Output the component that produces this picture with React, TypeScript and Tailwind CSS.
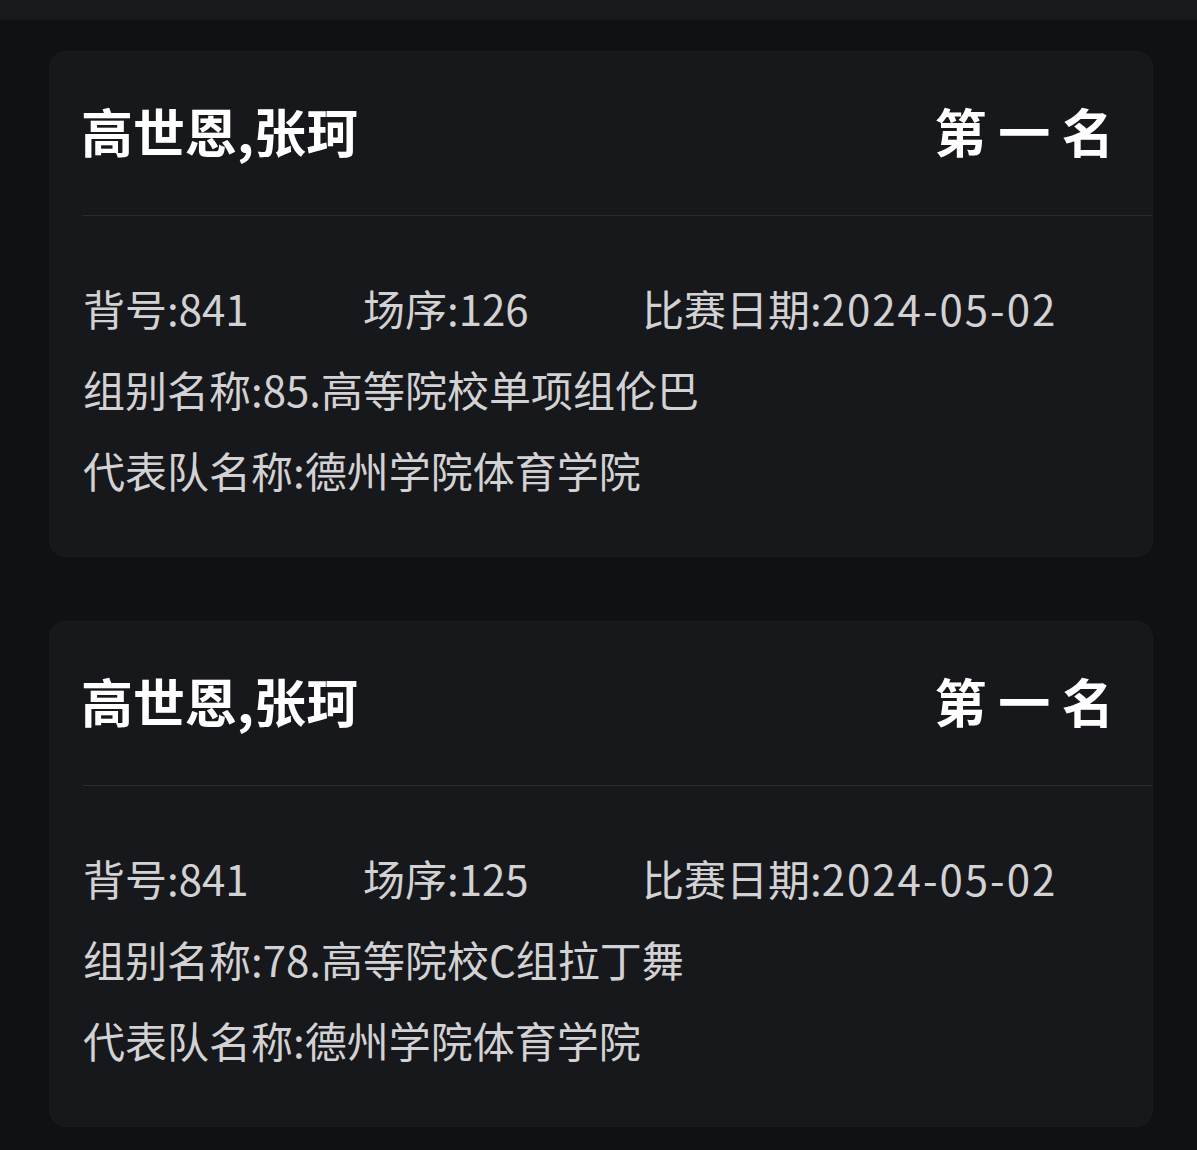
const results = [
  { names: '高世恩,张珂', rank: '第 一 名', bib: '841', order: '126', date: '2024-05-02', group: '85.高等院校单项组伦巴', team: '德州学院体育学院' },
  { names: '高世恩,张珂', rank: '第 一 名', bib: '841', order: '125', date: '2024-05-02', group: '78.高等院校C组拉丁舞', team: '德州学院体育学院' },
];

const ResultCard = ({ item }: { item: (typeof results)[number] }) => (
  <div className="rounded-[16px] bg-[#17181b] pl-[33px] shadow-[0_0_0_1px_#1b1c1f]">
    <div className="h-[164px] flex items-center justify-between pr-[38px] pb-[6px] border-b border-[#2a2b2e]">
      <h2 className="text-[52px] leading-none font-bold text-white -ml-[2px]">{item.names}</h2>
      <span className="text-[52px] leading-none font-bold text-white whitespace-pre">{item.rank}</span>
    </div>
    <div className="pt-[51px] pb-[46px] text-[42px] leading-[81px] text-[#d2d2d4]">
      <div className="flex">
        <span className="w-[280px]">背号:{item.bib}</span>
        <span className="w-[279px]">场序:{item.order}</span>
        <span>
          比赛日期:<span className="tracking-[2px]">{item.date}</span>
        </span>
      </div>
      <div>组别名称:{item.group}</div>
      <div>代表队名称:{item.team}</div>
    </div>
  </div>
);

export default function App() {
  return (
    <div className="min-h-[1150px] bg-[#101113] font-['Noto_Sans_CJK_SC','Noto_Sans',sans-serif]">
      <div className="h-[20px] bg-[#18191c]" />
      <div className="flex flex-col gap-[66px] pt-[32px] pl-[50px] pr-[45px]">
        {results.map((item, i) => (
          <ResultCard key={i} item={item} />
        ))}
      </div>
    </div>
  );
}
